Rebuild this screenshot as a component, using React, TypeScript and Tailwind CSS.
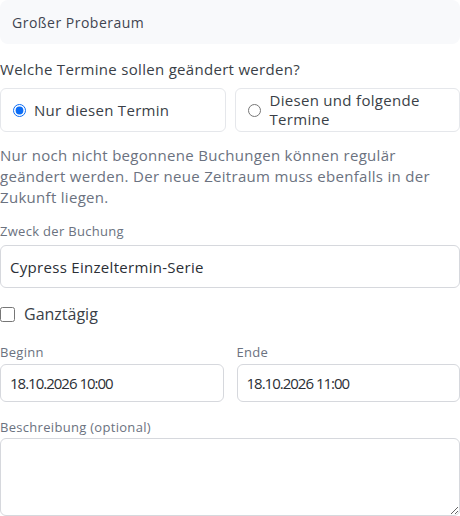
import { useState } from 'react';

const font = { fontFamily: '"Open Sans", "Noto Sans", sans-serif' };

export default function App() {
  const [scope, setScope] = useState<'single' | 'following'>('single');
  const [allDay, setAllDay] = useState(false);

  return (
    <div className="w-[460px] h-[516px] overflow-hidden bg-white text-[#374151] tracking-[0.3px]" style={font}>
      {/* Room */}
      <div className="h-[44px] rounded-lg bg-[#f8f9fb] px-3 flex items-center text-[14px] tracking-[0.5px] text-[#3f4550]">
        Großer Proberaum
      </div>

      {/* Scope */}
      <div className="mt-[14px] text-[15px] leading-[22px] text-[#3a3f47]">Welche Termine sollen geändert werden?</div>
      <div className="mt-[8px] grid grid-cols-2 gap-[9px]">
        <label className="h-[44px] rounded-md border border-[#e5e7eb] flex items-center gap-[8px] px-[12px] cursor-pointer">
          <input
            type="radio"
            name="scope"
            checked={scope === 'single'}
            onChange={() => setScope('single')}
            className="w-[13px] h-[13px] accent-[#0b6cf5] m-0"
          />
          <span className="text-[15px] text-[#3a3f47]">Nur diesen Termin</span>
        </label>
        <label className="h-[44px] rounded-md border border-[#e5e7eb] flex items-center gap-[9px] px-[12px] cursor-pointer">
          <input
            type="radio"
            name="scope"
            checked={scope === 'following'}
            onChange={() => setScope('following')}
            className="w-[13px] h-[13px] accent-[#0b6cf5] m-0"
          />
          <span className="text-[15px] leading-[19px] text-[#3a3f47]">Diesen und folgende Termine</span>
        </label>
      </div>

      <p className="mt-[13px] text-[15px] leading-[21px] text-[#6b7280]">
        Nur noch nicht begonnene Buchungen können regulär geändert werden. Der neue Zeitraum muss ebenfalls in der
        Zukunft liegen.
      </p>

      {/* Purpose */}
      <div className="mt-[14px] text-[13px] leading-[18px] text-[#6b7280]">Zweck der Buchung</div>
      <input
        defaultValue="Cypress Einzeltermin-Serie"
        className="mt-[5px] w-full h-[43px] rounded-md border border-[#d6d8dd] px-[9px] text-[15px] tracking-[0.3px] text-[#2b2f36] outline-none"
        style={font}
      />

      <label className="mt-[14px] h-[24px] flex items-center gap-[9px] cursor-pointer">
        <input
          type="checkbox"
          checked={allDay}
          onChange={() => setAllDay(!allDay)}
          className="w-[15px] h-[15px] m-0"
        />
        <span className="text-[16px] tracking-normal text-[#3a3f47]">Ganztägig</span>
      </label>

      {/* Times */}
      <div className="mt-[17px] grid grid-cols-2 gap-[13px]">
        <div>
          <div className="text-[13px] leading-[18px] text-[#6b7280]">Beginn</div>
          <input
            defaultValue="18.10.2026 10:00"
            className="mt-[3px] w-full h-[38px] rounded-md border border-[#d6d8dd] px-[9px] text-[15px] tracking-[-1px] text-[#2b2f36] outline-none"
            style={font}
          />
        </div>
        <div>
          <div className="text-[13px] leading-[18px] text-[#6b7280]">Ende</div>
          <input
            defaultValue="18.10.2026 11:00"
            className="mt-[3px] w-full h-[38px] rounded-md border border-[#d6d8dd] px-[9px] text-[15px] tracking-[-1px] text-[#2b2f36] outline-none"
            style={font}
          />
        </div>
      </div>

      <div className="mt-[16px] text-[13px] leading-[18px] text-[#6b7280]">Beschreibung (optional)</div>
      <textarea
        className="mt-[2px] block w-full h-[78px] rounded-md border border-[#d6d8dd] px-[9px] py-[6px] text-[15px] outline-none"
        style={font}
      />
    </div>
  );
}
